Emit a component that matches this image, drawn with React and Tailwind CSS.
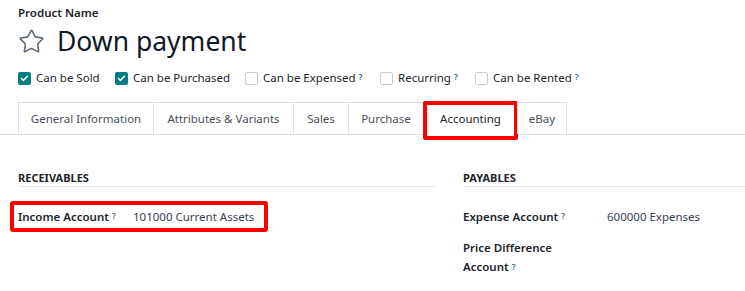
import { Star, Check } from 'lucide-react';

const TABS = [
    { label: 'General Information', w: 'w-[135px]' },
    { label: 'Attributes & Variants', w: 'w-[140px]' },
    { label: 'Sales', w: 'w-[55px]' },
    { label: 'Purchase', w: 'w-[75px]' },
    { label: 'Accounting', w: 'w-[94px]', active: true },
    { label: 'eBay', w: 'w-[50px]' },
];

const OPTIONS = [
    { label: 'Can be Sold', checked: true, w: 'w-[97px]' },
    { label: 'Can be Purchased', checked: true, w: 'w-[130px]' },
    { label: 'Can be Expensed', help: true, w: 'w-[135px]' },
    { label: 'Recurring', help: true, w: 'w-[95px]' },
    { label: 'Can be Rented', help: true, w: '' },
];

const Help = () => (
    <sup className="ml-[3px] text-[8.5px] font-semibold text-[#2f5f80] relative -top-[1px]">?</sup>
);

const Option = ({ label, checked, help, w }) => (
    <label className={`flex items-center ${w}`}>
        {checked ? (
            <span className="w-[13px] h-[13px] rounded-[2px] bg-[#017e84] flex items-center justify-center">
                <Check className="w-[9px] h-[9px] text-white" strokeWidth={4} />
            </span>
        ) : (
            <span className="w-[13px] h-[13px] rounded-[2px] border border-[#c9ccd0] bg-white" />
        )}
        <span className="ml-[5px] text-[#212529]">{label}</span>
        {help && <Help />}
    </label>
);

const App = () => {
    return (
        <div
            className="w-[745px] h-[291px] bg-white overflow-hidden text-[11.5px] text-[#212529]"
            style={{ fontFamily: '"Noto Sans", "Open Sans", sans-serif' }}
        >
            {/* Title block */}
            <div className="px-[18px] pt-[3px]">
                <div className="font-semibold text-[11.5px] leading-[20px]">Product Name</div>
                <div className="flex items-center mt-[1px] h-[34px]">
                    <Star className="w-[27px] h-[27px] text-[#5f6b7a]" strokeWidth={1.4} />
                    <h1 className="ml-[12px] text-[26.5px] leading-[34px] text-[#111827]">Down payment</h1>
                </div>
                <div className="flex items-center mt-[10px] h-[20px]">
                    {OPTIONS.map(o => <Option key={o.label} {...o} />)}
                </div>
            </div>

            {/* Tabs */}
            <div className="mt-[14px] border-b border-[#dee2e6]">
                <ul className="flex items-start ml-[18px] h-[32px]">
                    {TABS.map((t, i) => (
                        <li
                            key={t.label}
                            className={`relative flex items-center justify-center ${t.w} border-t border-l border-[#dee2e6] ${i === TABS.length - 1 ? 'border-r' : ''} ${t.active ? 'h-[33px] pb-px bg-white text-[#212529]' : 'h-[32px] text-[#495057]'}`}
                        >
                            {t.label}
                            {t.active && (
                                <div className="absolute -top-[2px] -bottom-[5px] -left-px -right-px border-[4px] border-[#ff0000] rounded-[2px]" />
                            )}
                        </li>
                    ))}
                </ul>
            </div>

            {/* Accounting page */}
            <div className="flex pl-[18px] pt-[36px]">
                <div className="w-[417px]">
                    <div className="font-bold text-[11px] uppercase leading-[14px] pb-px border-b border-[#e5e7eb]">Receivables</div>
                    <div className="relative flex items-center mt-[20px] h-[20px]">
                        <div className="w-[115px] font-semibold flex items-center">
                            Income Account<Help />
                        </div>
                        <div className="text-[#374151]">101000 Current Assets</div>
                        <div className="absolute -left-[8px] w-[258px] -top-[6px] -bottom-[5px] border-[4px] border-[#ff0000] rounded-[3px]" />
                    </div>
                </div>
                <div className="flex-1 ml-[28px]">
                    <div className="font-bold text-[11px] uppercase leading-[14px] pb-px border-b border-[#e5e7eb]">Payables</div>
                    <div className="flex items-center mt-[20px] h-[20px]">
                        <div className="w-[144px] font-semibold flex items-center">
                            Expense Account<Help />
                        </div>
                        <div className="text-[#374151]">600000 Expenses</div>
                    </div>
                    <div className="mt-[11px] font-semibold leading-[19px] w-[110px]">
                        Price Difference<br />Account<Help />
                    </div>
                </div>
            </div>
        </div>
    );
};

export default App;
